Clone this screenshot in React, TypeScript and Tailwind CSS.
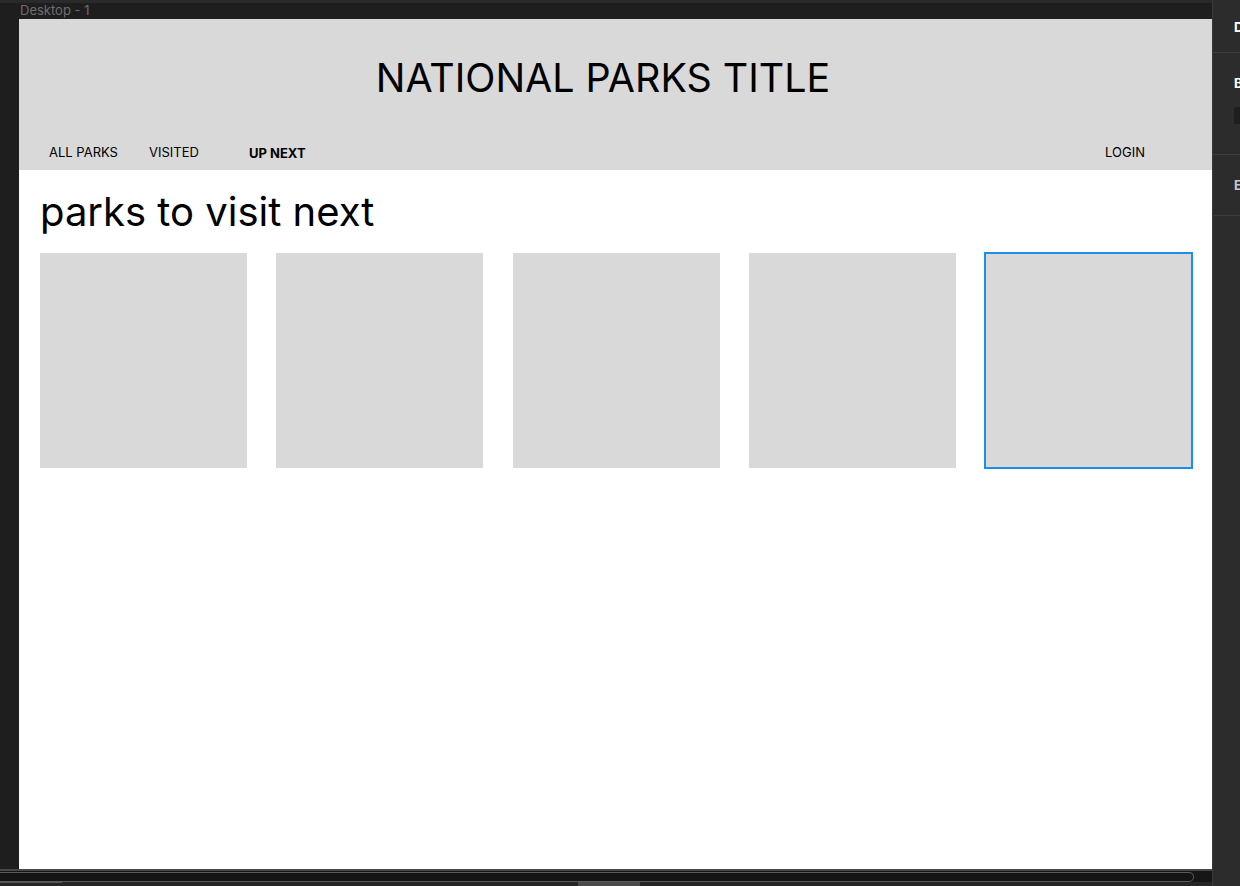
import React from "react";

const parks = [1, 2, 3, 4, 5];

const NavLink = ({ label, active }: { label: string; active?: boolean }) => (
  <span
    className={
      "w-[100px] text-[13px] leading-[16px] text-black " +
      (active ? "font-bold pt-[1px]" : "font-normal")
    }
  >
    {label}
  </span>
);

const Frame = () => {
  return (
    <div className="w-[1193px] h-[850px] bg-white flex flex-col font-['Inter',sans-serif] overflow-hidden">
      <header className="h-[151px] bg-[#d9d9d9] flex flex-col">
        <h1 className="pt-[35px] pr-[25px] text-center text-[39.4px] leading-[48px] font-normal text-black">
          NATIONAL PARKS TITLE
        </h1>
        <nav className="mt-auto pb-[9px] pl-[30px] flex items-start">
          <NavLink label="ALL PARKS" />
          <NavLink label="VISITED" />
          <NavLink label="UP NEXT" active />
          <span className="ml-auto mr-[67px] text-[13px] leading-[16px] text-black">LOGIN</span>
        </nav>
      </header>

      <main className="pl-[21px] pt-[18px]">
        <h2 className="text-[40px] leading-[48px] font-normal text-black">parks to visit next</h2>
        <div className="mt-[17px] flex gap-[29.3px]">
          {parks.map((p) => (
            <div
              key={p}
              className={
                "w-[207px] h-[215px] bg-[#d9d9d9] " +
                (p === 5 ? "outline-2 outline-[#1c8fe6] -outline-offset-1" : "")
              }
            />
          ))}
        </div>
      </main>
    </div>
  );
};

const SidePanel = () => (
  <aside className="w-[28px] h-full bg-[#2c2c2c] border-l border-[#3a3a3a] flex flex-col overflow-hidden font-['Inter',sans-serif]">
    <div className="h-[53px] border-b border-[#3d3d3d] pl-[21px] pt-[19px]">
      <span className="block whitespace-nowrap text-[13px] leading-[16px] font-bold text-white">Design</span>
    </div>
    <div className="h-[102px] border-b border-[#3d3d3d] pl-[21px] pt-[22px]">
      <span className="block whitespace-nowrap text-[13px] leading-[16px] font-bold text-white">Background</span>
      <div className="mt-[16px] w-[20px] h-[17px] bg-[#1e1e1e] rounded-[2px]" />
    </div>
    <div className="h-[61px] border-b border-[#3d3d3d] pl-[21px] pt-[22px]">
      <span className="block whitespace-nowrap text-[13px] leading-[16px] font-bold text-[#c8c8c8]">Export</span>
    </div>
  </aside>
);

export default function App() {
  return (
    <div className="w-[1240px] h-[886px] flex bg-[#1e1e1e] overflow-hidden">
      <div className="w-[1212px] flex flex-col">
        <div className="h-[19px] border-t-[3px] border-[#2a2a2a] pl-[20px]">
          <span className="block text-[13px] leading-[14px] text-[#6e6e6e] font-['Inter',sans-serif]">Desktop - 1</span>
        </div>
        <div className="pl-[19px]">
          <Frame />
        </div>
        <div className="h-[2px] bg-[#484848]" />
        <div className="h-[11px] bg-[#161616] flex items-center">
          <div className="w-[1194px] h-[10px] rounded-r-full border border-[#5a5a5a] border-l-0 bg-[#141414]" />
        </div>
        <div className="flex-1 bg-[#262626] flex items-start">
          <div className="w-[62px] h-[1px] bg-[#555]" />
          <div className="ml-[516px] w-[62px] h-full bg-[#4a4a4a]" />
        </div>
      </div>
      <SidePanel />
    </div>
  );
}
